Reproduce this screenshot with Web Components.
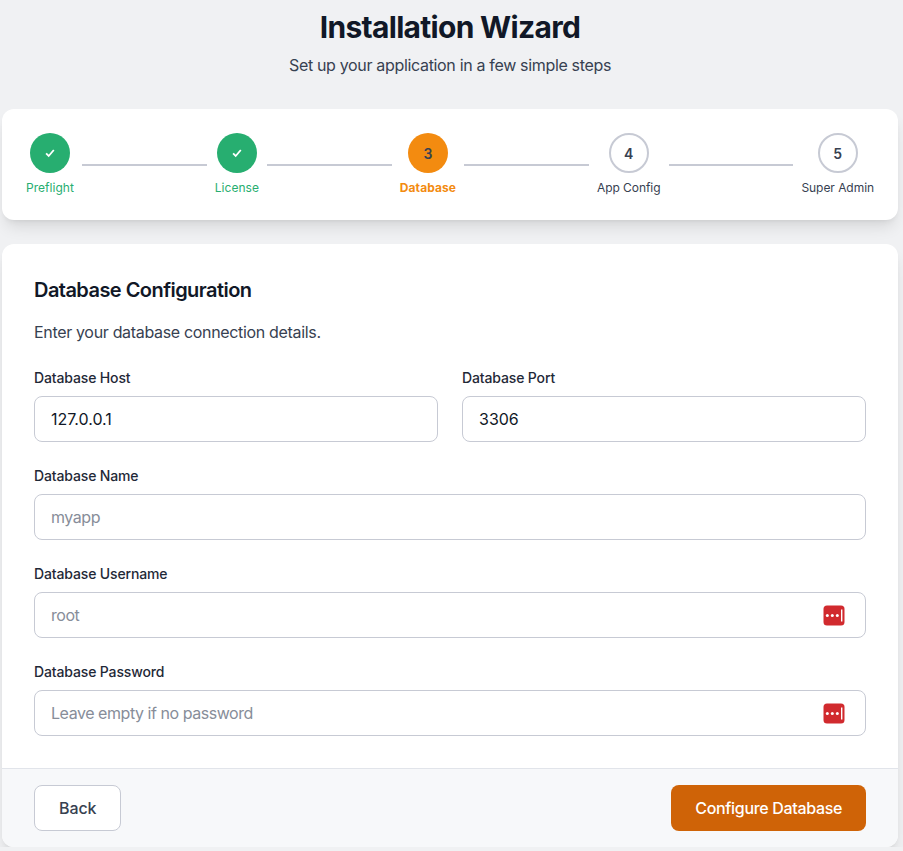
<!DOCTYPE html>
<html lang="en"><head><meta charset="utf-8"><title>Installation Wizard</title>
<style>
html,body{margin:0;padding:0;background:#f0f1f3;overflow:hidden}
body{font-family:Inter,"Liberation Sans",sans-serif;color:#111827;-webkit-font-smoothing:antialiased}
</style></head><body>
<install-page>
  <wizard-header slot="header" title-text="Installation Wizard" subtitle="Set up your application in a few simple steps"></wizard-header>
  <wizard-stepper slot="stepper">
    <wizard-step state="done" label="Preflight"></wizard-step>
    <wizard-step state="done" label="License"></wizard-step>
    <wizard-step state="active" num="3" label="Database"></wizard-step>
    <wizard-step state="todo" num="4" label="App Config"></wizard-step>
    <wizard-step state="todo" num="5" label="Super Admin"></wizard-step>
  </wizard-stepper>
  <form-card slot="card">
    <span slot="title">Database Configuration</span>
    <span slot="desc">Enter your database connection details.</span>
    <form-row>
      <form-field label="Database Host" value="127.0.0.1"></form-field>
      <form-field label="Database Port" value="3306"></form-field>
    </form-row>
    <form-field label="Database Name" placeholder="myapp"></form-field>
    <form-field label="Database Username" placeholder="root" key></form-field>
    <form-field label="Database Password" placeholder="Leave empty if no password" key></form-field>
    <wizard-button slot="back" kind="secondary">Back</wizard-button>
    <wizard-button slot="next" kind="primary">Configure Database</wizard-button>
  </form-card>
</install-page>
<script>
function def(name, html){
  customElements.define(name, class extends HTMLElement{
    connectedCallback(){
      if(this.shadowRoot) return;
      const a=n=>{const v=this.getAttribute(n);return v===null?'':v};
      this.attachShadow({mode:'open'}).innerHTML = typeof html==='function'?html(a,this):html;
    }
  });
}
const SHADOW='0 10px 15px -3px rgba(0,0,0,.1),0 4px 6px -4px rgba(0,0,0,.1)';
def('install-page',`<style>
:host{display:block;width:896px;margin-left:2px;padding-top:9px}
</style><slot name="header"></slot><slot name="stepper"></slot><slot name="card"></slot>`);
def('wizard-header',a=>`<style>
:host{display:block;text-align:center;margin-bottom:32px}
h1{margin:0 0 8px;font-size:30px;line-height:36px;font-weight:700;color:#111827;letter-spacing:-.7px}
p{margin:0;font-size:16px;line-height:24px;color:#374151;letter-spacing:-.33px}
</style><h1>${a('title-text')}</h1><p>${a('subtitle')}</p>`);
def('wizard-stepper',(a,el)=>{
  const n=el.children.length;
  el.querySelectorAll('wizard-step').forEach((s,i)=>s.slot='s'+i);
  let m='';
  for(let i=0;i<n;i++){m+=`<slot name="s${i}"></slot>`;if(i<n-1)m+='<i class="line"></i>';}
  return `<style>
:host{display:flex;align-items:center;background:#fff;border-radius:12px;padding:24px;margin-bottom:24px;box-shadow:${SHADOW}}
.line{flex:1 1 0;height:2px;margin:1px 8px 0;background:#c7cad4;display:block}
</style>${m}`;
});
def('wizard-step',a=>{
  const s=a('state');
  const inner=s==='done'
    ?`<svg width="12" height="12" viewBox="0 0 12 12" fill="none" aria-hidden="true"><path d="M2.1 6.4 4.7 9 9.8 3" stroke="#fff" stroke-width="1.8"/></svg>`
    :a('num');
  return `<style>
:host{display:flex;flex-direction:column;align-items:center;flex:none}
.c{width:40px;height:40px;box-sizing:border-box;border-radius:50%;display:flex;align-items:center;justify-content:center;font-size:14px;font-weight:600;color:#374151}
.l{margin-top:7px;padding-bottom:1px;font-size:12px;line-height:15px;white-space:nowrap;color:#374151;letter-spacing:-.05px}
.done .c{background:#27ae70}.done .l{color:#27ae70;letter-spacing:.03px}
.active .c{background:#f38b10}.active .l{color:#f38b10;font-weight:700;letter-spacing:.08px}
.todo .c{background:#fff;border:2px solid #c7cad4}
.w{display:contents}
</style><div class="w ${s}"><div class="c">${inner}</div><div class="l">${a('label')}</div></div>`;
});
def('form-card',`<style>
:host{display:block;background:#fff;border-radius:12px;overflow:hidden;box-shadow:${SHADOW}}
.body{padding:32px;display:flex;flex-direction:column;gap:24px}
.head{display:flex;flex-direction:column}
h2{margin:0 0 16px;font-size:20px;line-height:28px;font-weight:600;color:#111827;letter-spacing:-.55px}
p{margin:0;font-size:16px;line-height:24px;color:#374151;letter-spacing:-.33px}
footer{display:flex;justify-content:space-between;background:#f7f8fa;border-top:1px solid #e1e4ea;padding:16px 32px}
</style>
<div class="body"><div class="head"><h2><slot name="title"></slot></h2><p><slot name="desc"></slot></p></div><slot></slot></div>
<footer><slot name="back"></slot><slot name="next"></slot></footer>`);
def('form-row',`<style>:host{display:grid;grid-template-columns:1fr 1fr;gap:24px}</style><slot></slot>`);
def('form-field',(a,el)=>{
  const v=a('value'),p=a('placeholder');
  return `<style>
:host{display:block;position:relative}
.lab{display:block;font-size:14px;line-height:20px;font-weight:500;color:#1f2937;margin-bottom:8px;letter-spacing:-.14px}
.box{position:relative;height:46px;box-sizing:border-box;border:1px solid #c7cad4;border-radius:8px;background:#fff;display:flex;align-items:center;padding:0 16px;font-size:16px}
.v{color:#111827}.p{color:#878d99;letter-spacing:-.45px}
svg{position:absolute;right:20px;top:12px}
</style><span class="lab">${a('label')}</span><div class="box"><span class="${v?'v':'p'}">${v||p}</span>${el.hasAttribute('key')?`<svg width="22" height="21" viewBox="0 0 22 21" aria-hidden="true"><rect x=".5" y=".5" width="21" height="20" rx="3.5" fill="#d12a2e"/><circle cx="4.3" cy="10.5" r="1.5" fill="#fff"/><circle cx="9.3" cy="10.5" r="1.5" fill="#fff"/><circle cx="14.3" cy="10.5" r="1.5" fill="#fff"/><rect x="18" y="4.5" width="1.4" height="12" fill="#fff"/></svg>`:''}</div>`;
});
def('wizard-button',(a)=>{
  const pr=a('kind')==='primary';
  return `<style>
:host{display:flex;align-items:center;justify-content:center;height:46px;box-sizing:border-box;border-radius:8px;font-size:16px;font-weight:500;letter-spacing:${pr?'-.33px':'-.1px'};padding:0 24px;
${pr?'background:#cf6307;color:#fff;':'background:#fff;color:#374151;border:1px solid #c7cad4;'}}
</style><slot></slot>`;
});
</script>
</body></html>
